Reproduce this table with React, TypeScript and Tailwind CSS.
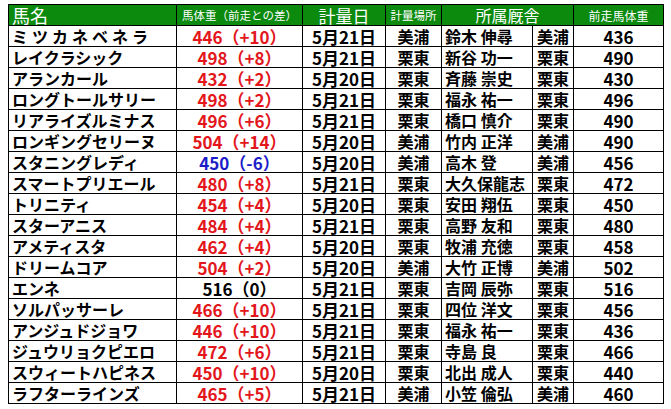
type Row = [string, string, string, string, string, string, string]

const rows: Row[] = [
  ["ミツカネベネラ", "446（+10）", "5月21日", "美浦", "鈴木 伸尋", "美浦", "436"],
  ["レイクラシック", "498（+8）", "5月21日", "栗東", "新谷 功一", "栗東", "490"],
  ["アランカール", "432（+2）", "5月20日", "栗東", "斉藤 崇史", "栗東", "430"],
  ["ロングトールサリー", "498（+2）", "5月21日", "栗東", "福永 祐一", "栗東", "496"],
  ["リアライズルミナス", "496（+6）", "5月21日", "栗東", "橋口 慎介", "栗東", "490"],
  ["ロンギングセリーヌ", "504（+14）", "5月20日", "美浦", "竹内 正洋", "美浦", "490"],
  ["スタニングレディ", "450（-6）", "5月20日", "美浦", "高木 登", "美浦", "456"],
  ["スマートプリエール", "480（+8）", "5月21日", "栗東", "大久保龍志", "栗東", "472"],
  ["トリニティ", "454（+4）", "5月20日", "栗東", "安田 翔伍", "栗東", "450"],
  ["スターアニス", "484（+4）", "5月21日", "栗東", "高野 友和", "栗東", "480"],
  ["アメティスタ", "462（+4）", "5月20日", "栗東", "牧浦 充徳", "栗東", "458"],
  ["ドリームコア", "504（+2）", "5月20日", "美浦", "大竹 正博", "美浦", "502"],
  ["エンネ", "516（0）", "5月21日", "栗東", "吉岡 辰弥", "栗東", "516"],
  ["ソルパッサーレ", "466（+10）", "5月21日", "栗東", "四位 洋文", "栗東", "456"],
  ["アンジュドジョワ", "446（+10）", "5月21日", "栗東", "福永 祐一", "栗東", "436"],
  ["ジュウリョクピエロ", "472（+6）", "5月21日", "栗東", "寺島 良", "栗東", "466"],
  ["スウィートハピネス", "450（+10）", "5月20日", "栗東", "北出 成人", "栗東", "440"],
  ["ラフターラインズ", "465（+5）", "5月21日", "美浦", "小笠 倫弘", "美浦", "460"],
]

const weightColor = (w: string) => {
  if (w.includes("+")) return "text-[#e3161c]"
  if (w.includes("-")) return "text-[#1c1cc8]"
  return "text-black"
}

export default function App() {
  return (
    <div className="w-[671px] h-[409px] bg-white pl-[8px] pt-[4px] font-['Noto_Sans_CJK_JP',sans-serif]">
      <table className="border-collapse table-fixed w-[655px] text-black">
        <colgroup>
          <col className="w-[168px]" />
          <col className="w-[126px]" />
          <col className="w-[83px]" />
          <col className="w-[56px]" />
          <col className="w-[91px]" />
          <col className="w-[41px]" />
          <col className="w-[90px]" />
        </colgroup>
        <thead>
          <tr className="h-[21px] bg-[#0b8a0e] text-white leading-[19px]">
            <th className="border border-black text-left pl-[3px] text-[18px] font-normal p-0">馬名</th>
            <th className="border border-black text-[11.5px] font-normal p-0 whitespace-nowrap">馬体重（前走との差）</th>
            <th className="border border-black text-[17px] font-normal p-0">計量日</th>
            <th className="border border-black text-[11.5px] font-normal p-0">計量場所</th>
            <th colSpan={2} className="border border-black text-[16px] font-normal p-0">所属厩舎</th>
            <th className="border border-black text-[12px] font-normal p-0">前走馬体重</th>
          </tr>
        </thead>
        <tbody className="font-bold text-[17px] leading-[19px]">
          {rows.map((r, i) => (
            <tr key={r[0]} className="h-[21px]">
              <td
                className={`border border-black pl-[3px] whitespace-nowrap text-[16px] ${
                  i === 0 ? "tracking-[4px]" : ""
                }`}
              >
                {r[0]}
              </td>
              <td className={`border border-black text-center whitespace-nowrap ${weightColor(r[1])}`}>{r[1]}</td>
              <td className="border border-black text-center">{r[2]}</td>
              <td className="border border-black text-center text-[16px]">{r[3]}</td>
              <td className="border border-black pl-[3px] whitespace-nowrap text-[16px]">{r[4]}</td>
              <td className="border border-black text-center text-[16px]">{r[5]}</td>
              <td className="border border-black text-center">{r[6]}</td>
            </tr>
          ))}
        </tbody>
      </table>
    </div>
  )
}
